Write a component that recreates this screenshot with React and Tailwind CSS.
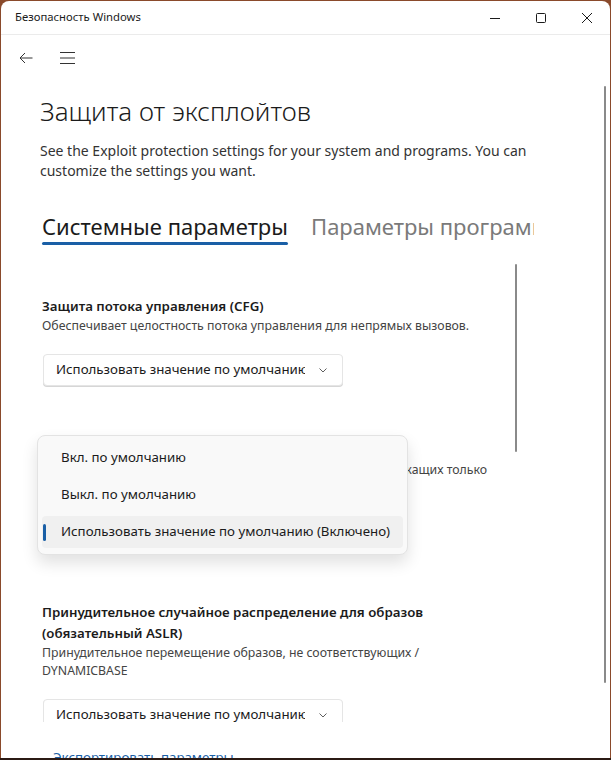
import React from 'react';

const font = { fontFamily: '"Segoe UI", "Noto Sans", sans-serif' };

function Select({ value }) {
    return (
        <div className="ml-[1px] w-[300px] h-[32px] flex items-center justify-between rounded-[4px] border border-[#e5e5e5] bg-white pl-[12px] pr-[14px] shadow-[0_1px_0_#d6d6d6]">
            <span className="text-[13.3px] text-[#1b1b1b] whitespace-nowrap overflow-hidden w-[249px]">{value}</span>
            <svg width="10" height="10" viewBox="0 0 10 10" className="text-[#5f5f5f]">
                <path d="M1.5 3.5 L5 7 L8.5 3.5" fill="none" stroke="currentColor" strokeWidth="1" />
            </svg>
        </div>
    );
}

function Section({ title, desc, value }) {
    return (
        <div className="pl-[41px]">
            <div className="text-[13.3px] font-semibold leading-[21px] text-[#1b1b1b]">{title}</div>
            <div className="text-[12.3px] leading-[18px] text-[#444]">{desc}</div>
            <div className="mt-[19px]">
                <Select value={value} />
            </div>
        </div>
    );
}

export default function App() {
    const options = ['Вкл. по умолчанию', 'Выкл. по умолчанию', 'Использовать значение по умолчанию (Включено)'];

    return (
        <div className="w-[611px] h-[760px] bg-[#2b1a14] overflow-hidden" style={font}>
            <div className="h-[758px] bg-[#8a4a2b] pt-[1px] pl-[1px] pr-[1px]">
                <div className="relative h-[757px] bg-white rounded-t-[8px] overflow-hidden flex flex-col">
                    {/* title bar */}
                    <div className="h-[34px] shrink-0 flex items-center border-b border-[#ebebeb]">
                        <span className="pl-[14px] text-[11.3px] text-[#1b1b1b] flex-1">Безопасность Windows</span>
                        <div className="flex">
                            <div className="w-[46px] h-[33px] flex items-center justify-center">
                                <svg width="10" height="10" viewBox="0 0 10 10"><path d="M0 5.5 H10" stroke="#1b1b1b" strokeWidth="1" /></svg>
                            </div>
                            <div className="w-[46px] h-[33px] flex items-center justify-center">
                                <svg width="10" height="10" viewBox="0 0 10 10"><rect x="0.5" y="0.5" width="9" height="9" rx="1" fill="none" stroke="#1b1b1b" strokeWidth="1" /></svg>
                            </div>
                            <div className="w-[46px] h-[33px] flex items-center justify-center">
                                <svg width="10" height="10" viewBox="0 0 10 10"><path d="M0 0 L10 10 M10 0 L0 10" stroke="#1b1b1b" strokeWidth="1" /></svg>
                            </div>
                        </div>
                    </div>

                    {/* nav */}
                    <div className="h-[45px] shrink-0 flex items-center pl-[18px] gap-[27px]">
                        <svg width="14" height="12" viewBox="0 0 14 12">
                            <path d="M13.5 6 H1 M6 1 L1 6 L6 11" fill="none" stroke="#333" strokeWidth="1" />
                        </svg>
                        <svg width="16" height="12" viewBox="0 0 16 12">
                            <path d="M0 0.5 H15 M0 6 H15 M0 11.5 H15" fill="none" stroke="#333" strokeWidth="1" />
                        </svg>
                    </div>

                    <div className="flex-1 flex overflow-hidden">
                        <div className="flex-1 relative overflow-hidden">
                            <div className="pl-[39px] pt-[14px]">
                                <h1 className="text-[26px] leading-[34px] font-light text-[#1b1b1b]">Защита от эксплойтов</h1>
                                <p className="mt-[13px] text-[14px] leading-[20px] text-[#333] w-[500px]">
                                    See the Exploit protection settings for your system and programs. You can<br />customize the settings you want.
                                </p>
                            </div>

                            {/* tabs */}
                            <div className="mt-[30px] pl-[41px] w-[533px] overflow-hidden">
                                <div className="flex gap-[23px] whitespace-nowrap">
                                    <div className="flex flex-col">
                                        <span className="text-[22px] leading-[30px] text-[#1b1b1b]">Системные параметры</span>
                                        <span className="mt-[1px] h-[3px] w-[246px] rounded-full bg-[#1a5fa6]"></span>
                                    </div>
                                    <span className="text-[22px] leading-[30px] text-[#7a7a7a]">Параметры программ</span>
                                </div>
                            </div>

                            {/* scrolling list */}
                            <div className="relative w-[520px] h-[458px] overflow-hidden mt-[19px]">
                                <div className="absolute left-[514px] top-[0px] w-[2px] h-[188px] bg-[#8a8a8a] rounded-full"></div>
                                <div className="pt-[32px] flex flex-col gap-[54px]">
                                    <Section
                                        title="Защита потока управления (CFG)"
                                        desc="Обеспечивает целостность потока управления для непрямых вызовов."
                                        value="Использовать значение по умолчанию (Включено)"
                                    />
                                    <Section
                                        title="Предотвращение выполнения данных (DEP)"
                                        desc={<>Предотвращает выполнение кода со страниц памяти, содержащих только<br />данные.</>}
                                        value="Использовать значение по умолчанию (Включено)"
                                    />
                                    <Section
                                        title={<>Принудительное случайное распределение для образов<br />(обязательный ASLR)</>}
                                        desc={<>Принудительное перемещение образов, не соответствующих /<br />DYNAMICBASE</>}
                                        value="Использовать значение по умолчанию (Выключено)"
                                    />
                                </div>
                            </div>

                            {/* open dropdown */}
                            <div className="absolute left-[36px] top-[355px] w-[371px] rounded-[8px] border border-[#e3e3e3] bg-[#f9f9f9] shadow-[0_8px_16px_rgba(0,0,0,0.12)] px-[4px] py-[6px] flex flex-col gap-[5px]">
                                {options.map((o, i) => (
                                    <div
                                        key={o}
                                        className={
                                            'relative h-[32px] flex items-center pl-[19px] rounded-[4px] text-[13.3px] text-[#1b1b1b] whitespace-nowrap ' +
                                            (i === 2 ? 'bg-[#f0f0f0]' : '')
                                        }
                                    >
                                        {i === 2 && <span className="absolute left-[1px] top-[8px] w-[3px] h-[17px] rounded-full bg-[#1a5fa6]"></span>}
                                        {o}
                                    </div>
                                ))}
                            </div>
                        </div>
                        <div className="w-[6px] shrink-0 pt-[6px] pb-[40px]">
                            <div className="w-[2px] h-full bg-[#8a8a8a] rounded-full"></div>
                        </div>
                    </div>

                    <div className="h-[35px] shrink-0 pl-[52px] pt-[21px]">
                        <span className="text-[13.3px] text-[#1a5fa6]">Экспортировать параметры</span>
                    </div>
                </div>
            </div>
        </div>
    );
}
